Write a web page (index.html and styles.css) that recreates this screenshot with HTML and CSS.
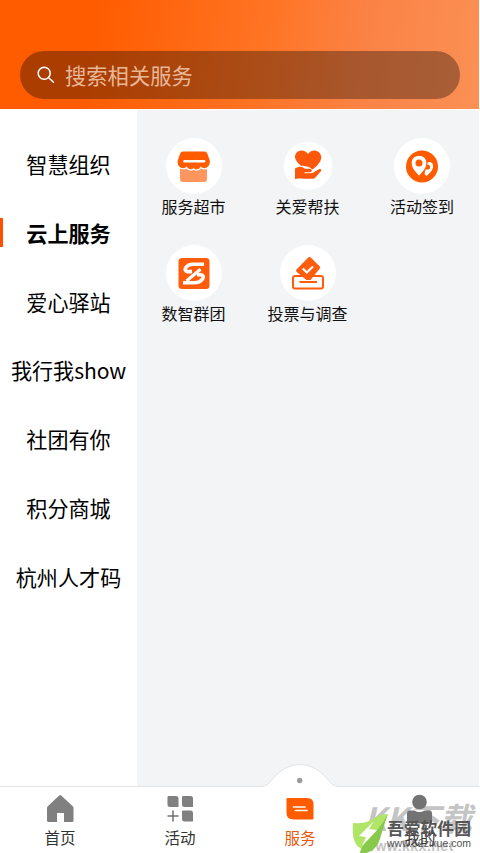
FILE: index.html
```html
<!DOCTYPE html>
<html lang="zh-CN">
<head>
<meta charset="utf-8">
<title>服务</title>
<link rel="stylesheet" href="styles.css">
</head>
<body>
<div class="app">
  <header class="header">
    <div class="search">
      <svg class="search-icon" width="20" height="20" viewBox="0 0 20 20" fill="none" stroke="#fff" stroke-width="1.5" stroke-linecap="round"><circle cx="8.200" cy="8.200" r="6"/><path d="M12.700 12.700l4.800 4.600"/></svg>
      <span>搜索相关服务</span>
    </div>
  </header>
  <main class="main">
    <nav class="side">
      <a class="side-item">智慧组织</a>
      <a class="side-item active">云上服务</a>
      <a class="side-item">爱心驿站</a>
      <a class="side-item">我行我<span class="latin">show</span></a>
      <a class="side-item">社团有你</a>
      <a class="side-item">积分商城</a>
      <a class="side-item">杭州人才码</a>
    </nav>
    <section class="grid">
      <div class="service">
        <div class="disc"><svg width="56" height="56" viewBox="0 0 56 56"><path d="M14 29h27v12q0 3-3 3H17q-3 0-3-3z" fill="#ff955f"/><path d="M17 13.500h21.500q2 0 2.800 2l2.500 7q.7 6-4.300 7.300-3 .5-5-1.400-3 4.400-7 1.400-4 3-7-1.400-2 1.900-5 1.400-4.500-1.300-3.800-7.300l2.500-7q.8-2 2.800-2z" fill="#ff5c00"/><path d="M13 29.500q4 2.500 7.500.2 3.500 4 7.200 1.500 4 2.500 7.300-1.500 3.500 2.500 7.500-.2" fill="none" stroke="#fff" stroke-width="1.300"/><path d="M18.500 23.200H38" stroke="#fff" stroke-width="2.500" stroke-linecap="round"/></svg></div>
        <span>服务超市</span>
      </div>
      <div class="service">
        <div class="disc small"><svg width="56" height="56" viewBox="0 0 56 56" fill="#fc570b"><path d="M28 16c3-4.500 9-4.500 11.700-1 3.500 5 1 10-7.200 16.500-4-4-7-3-11.500-3.800C14 22 14 17.500 16.500 14.700c3-3.300 9-3 11.500 1.300z"/><path d="M15 30.500c5-3 7-1.500 10 .3h5c2.600.4 2.300 3.200 0 3.500h-5.500v1h6c2-.2 3-.8 4.500-1.800l4-2.300c2-.7 3 .6 1.700 2.200l-5.400 6c-1.200 1.200-2 1.400-3.500 1.400H24l-4-.6-5 .8z"/></svg></div>
        <span>关爱帮扶</span>
      </div>
      <div class="service">
        <div class="disc"><svg width="56" height="56" viewBox="0 0 56 56"><circle cx="28" cy="28.500" r="16" fill="#ff5c00"/><path d="M33 25c3-2.800 7 0 6 4.500-.7 3.500-3.500 5.500-6.500 8.500l-2-2" fill="#fff"/><circle cx="33.500" cy="29" r="2.600" fill="#ff5c00"/><path d="M25 38.500C20 33 17 30 17 25c0-10.500 16-10.500 16 0 0 5-3 8-8 13.500z" fill="#fff" stroke="#ff5c00" stroke-width="1.200"/><circle cx="25" cy="25" r="3.500" fill="#ff5c00"/></svg></div>
        <span>活动签到</span>
      </div>
      <div class="service">
        <div class="disc"><svg width="56" height="56" viewBox="0 0 56 56"><rect x="12.500" y="13" width="31" height="31" rx="3.500" fill="#ff5c0b"/><g fill="none" stroke="#fff" stroke-width="3.600"><path d="M38 19.300H27c-7 0-10.500 6.700-5.500 7.300h4.500"/><path d="M17 37.700h11c8 0 12.500-7.400 6.500-7.900H31"/><path d="M34.500 24.200L20.500 36" stroke-width="3.200"/></g></svg></div>
        <span>数智群团</span>
      </div>
      <div class="service">
        <div class="disc"><svg width="56" height="56" viewBox="0 0 56 56"><rect x="13" y="31" width="30" height="12.500" rx="2" fill="#fff" stroke="#ff5c0b" stroke-width="2"/><path d="M28.500 12.300q1-.8 2 0l9 8.900q1 1 .2 2.200L30.500 35h-4L16.500 26.800q-1-1.200 0-2.300z" fill="#ff5c0b"/><path d="M22.800 23.500l4 4 6.200-6" fill="none" stroke="#fff" stroke-width="2.200"/><path d="M19.500 37h17.500" stroke="#ff5c0b" stroke-width="2"/></svg></div>
        <span>投票与调查</span>
      </div>
    </section>
  </main>
  <footer class="tabs">
    <svg class="bump" width="82" height="24" viewBox="0 0 82 24"><path d="M0 22.500C10 22.500 10 18 17 11.500 30-3 52-3 65 11.500 72 18 72 22.500 82 22.500V24H0z" fill="#fff"/><path d="M0 22.500C10 22.500 10 18 17 11.500 30-3 52-3 65 11.500 72 18 72 22.500 82 22.500" fill="none" stroke="#e2e3e5"/><circle cx="40.700" cy="16.500" r="2.700" fill="#9b9b9b"/></svg>
    <a class="tab"><svg width="30" height="30" viewBox="0 0 30 30"><path d="M14.200 2.500q1-.8 2 0L27.500 13q1 1 1 2v12.500q0 1.500-1.500 1.500h-8v-9h-7v9H3.500Q2 29 2 27.500V15q0-1 1-2z" fill="#808080"/></svg><span>首页</span></a>
    <a class="tab"><svg width="30" height="30" viewBox="0 0 30 30"><path d="M3.500 3H11q2.500 0 2.500 2.500V14H5q-2.500 0-2.500-2.500V4q0-1 1-1zM18 3h7.500Q28 3 28 5.500V14h-8.500Q17 14 17 11.500V4q0-1 1-1zM18 17.500h7.500q2.500 0 2.500 2.500v8.500h-8.500q-2.500 0-2.500-2.500v-7.500q0-1 1-1z" fill="#808080"/><path d="M2.500 23h11M8 17.500v11" stroke="#707070" stroke-width="1.500"/></svg><span>活动</span></a>
    <a class="tab active"><svg width="30" height="30" viewBox="0 0 30 30"><path d="M2.500 5H22q6.500 0 6.500 6v14.500q0 1-1 1H8.500q-7 0-7-7V6q0-1 1-1z" fill="#ff5c00"/><path d="M8.500 14h11.500M10.500 17.500h11.500" stroke="#fff" stroke-width="1.700" stroke-linecap="round"/></svg><span>服务</span></a>
    <div class="mark-kk"><span class="kk-name">KK下载</span><span class="kk-url">www.kkx.net</span></div>
    <a class="tab mine"><svg width="30" height="32" viewBox="0 0 30 32"><circle cx="14.500" cy="9" r="7.300" fill="#737373"/><path d="M5 17.500h4.500q5 3 10 0H24q3 0 3 3v10H2v-10q0-3 3-3z" fill="#737373"/></svg><span>我的</span></a>
    <div class="mark-wa"><svg width="36" height="43" viewBox="0 0 36 43"><path d="M1 9Q14 10 21 5 28 0 36 0 30 12 27 25 24 37 10 40l-3 3 3-8Q-1 31 1 9z" fill="#b0e568"/><path d="M15 27Q27 16 36 0q-5 14-8 25-4 13-18 15-1 1-3 3 1-9 8-16z" fill="#86c94b"/><path d="M22 7L7 22l7 1-4 9 15-16-8-1z" fill="#fff"/></svg><div class="wa-text"><span class="wa-name">吾爱软件园</span><span class="wa-url">www.52zixue.com</span></div></div>
  </footer>
</div>
</body>
</html>
```

FILE: styles.css
```css
* { box-sizing: border-box; }

body {
  margin: 0;
  background: #fff;
  font-family: "Noto Sans CJK SC", sans-serif;
  color: #111;
}

.app {
  width: 480px;
  height: 853px;
  display: flex;
  flex-direction: column;
  overflow: hidden;
}

.header {
  flex: none;
  height: 109px;
  width: 479px;
  padding: 51px 19px 0 20px;
  background: linear-gradient(98deg, #ff5c00 20%, #ff7424 55%, #fb8245 75%, #fb9055 100%);
}

.search {
  height: 48px;
  padding-left: 16px;
  border-radius: 24px;
  background: rgba(0, 0, 0, 0.33);
  display: flex;
  align-items: center;
  gap: 9px;
  font-size: 21.300px;
  color: #e8b799;
}

.search span { margin-top: -2px; }

.main {
  flex: 1;
  min-height: 0;
  display: flex;
  padding: 1px 1px 0 0;
}

.side {
  flex: none;
  width: 137px;
  padding-top: 19.500px;
}

.side-item {
  height: 68.850px;
  display: flex;
  justify-content: center;
  align-items: center;
  font-size: 21.100px;
  line-height: 30px;
  color: #000;
  white-space: nowrap;
  position: relative;
}

.latin { letter-spacing: -0.100px; }

.side-item.active { font-weight: 700; }

.side-item.active::before {
  content: "";
  position: absolute;
  left: 0;
  top: 19.500px;
  width: 3px;
  height: 29px;
  background: #ff5000;
}

.grid {
  flex: 1;
  background: #f3f4f6;
  display: grid;
  grid-template-columns: 113px 115px 114px;
  grid-auto-rows: 107px;
  align-content: start;
  padding-top: 28px;
}

.service {
  display: flex;
  flex-direction: column;
  align-items: center;
  font-size: 16px;
  line-height: 24px;
  white-space: nowrap;
}

.disc {
  width: 56px;
  height: 56px;
  border-radius: 50%;
  background: #fff;
}

.disc svg { display: block; }

.disc.small {
  background: radial-gradient(circle, #fff 23px, #f3f4f6 25px);
}

.tabs {
  flex: none;
  height: 67px;
  border-top: 1px solid #e2e3e5;
  background: #fff;
  display: flex;
  position: relative;
}

.bump {
  position: absolute;
  left: 259px;
  top: -23px;
}

.tab {
  flex: 1;
  padding-top: 6px;
  display: flex;
  flex-direction: column;
  align-items: center;
  font-size: 15.500px;
  line-height: 24px;
  color: #333;
}

.tab svg { flex: none; height: 30px; margin-bottom: 2px; }
.tab.active { color: #e8590c; }
.tab.mine { position: relative; }
.tab.mine svg { height: 32px; margin-bottom: 0; }

.mark-kk {
  position: absolute;
  left: 364px;
  top: 10px;
  display: flex;
  flex-direction: column;
  color: #c4c4c4;
  font-weight: 700;
  white-space: nowrap;
}

.kk-name {
  font-size: 32px;
  line-height: 40px;
  font-style: italic;
}

.kk-url {
  margin-top: 2px;
  font: 700 14px/14px "Liberation Sans", sans-serif;
  letter-spacing: 0.500px;
}

.mark-wa {
  position: absolute;
  left: 352px;
  top: 27px;
  display: flex;
}

.wa-text {
  display: flex;
  flex-direction: column;
  margin-left: -1px;
  padding-top: 5px;
  white-space: nowrap;
  color: #555;
}

.wa-name {
  font-size: 16.800px;
  line-height: 18px;
  font-weight: 700;
}

.wa-url {
  font: 10.500px/12px "Liberation Sans", sans-serif;
}
```
